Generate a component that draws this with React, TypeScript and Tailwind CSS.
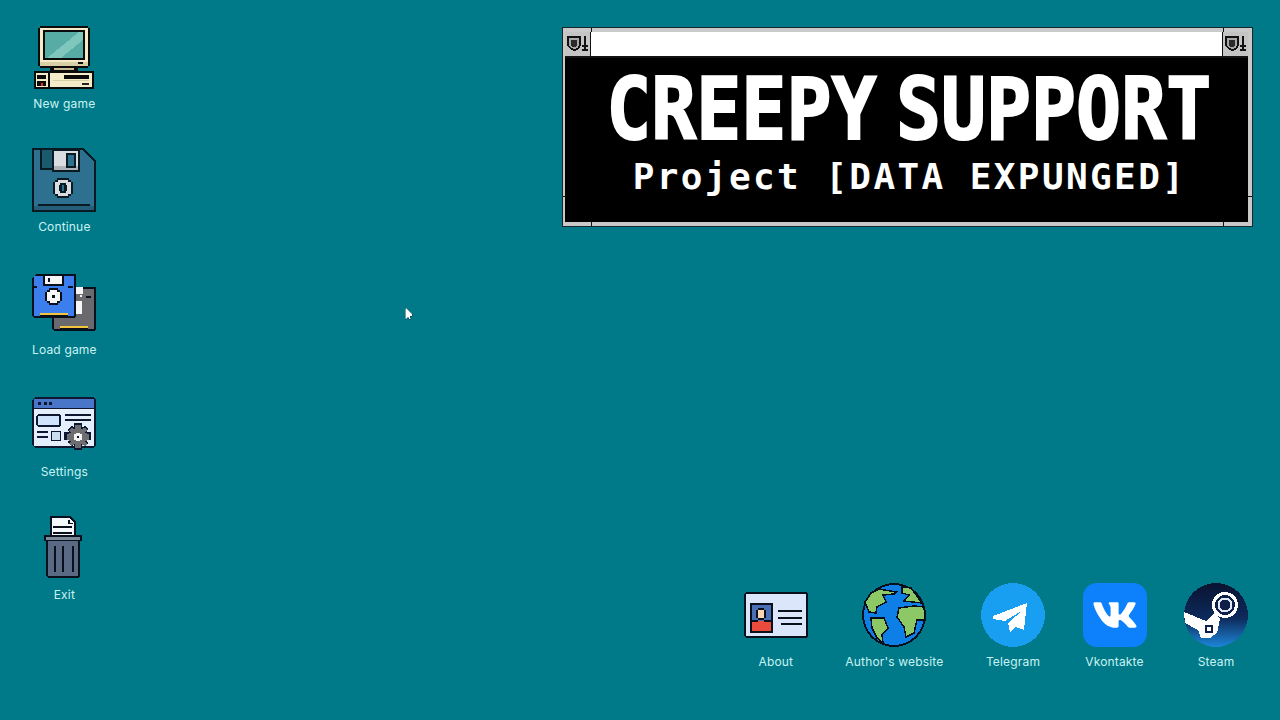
import type { ReactNode } from 'react'
import { FaVk } from 'react-icons/fa'

//-------------------------------Icons---------------------------------

const Pixel = ({ children }: { children: ReactNode }) => (
  <svg viewBox="0 0 64 64" shapeRendering="crispEdges" className="h-16 w-16">
    {children}
  </svg>
)

const ComputerIcon = () => (
  <Pixel>
    {/* monitor */}
    <path d="M8 1h48v2h2v38h-2v2H8v-2H6V3h2z" fill="#0b0b0b" />
    <rect x="8" y="3" width="48" height="38" fill="#f4ecc8" />
    <rect x="8" y="37" width="48" height="4" fill="#d9cfa4" />
    <rect x="11" y="5" width="42" height="30" fill="#0b0b0b" />
    <rect x="13" y="7" width="38" height="26" fill="#57ada5" />
    <path d="M15 33 47 7h4v8L29 33z" fill="#7fc6bc" />
    <rect x="46" y="37" width="5" height="2" fill="#0b0b0b" />
    {/* neck */}
    <rect x="18" y="43" width="28" height="3" fill="#0b0b0b" />
    <rect x="22" y="43" width="20" height="2" fill="#c9bd92" />
    {/* base */}
    <rect x="2" y="46" width="60" height="18" fill="#0b0b0b" />
    <rect x="4" y="48" width="56" height="14" fill="#f4ecc8" />
    <rect x="16" y="48" width="2" height="14" fill="#0b0b0b" />
    <rect x="5" y="50" width="9" height="4" fill="#0b0b0b" />
    <rect x="5" y="56" width="9" height="5" fill="#0b0b0b" />
    <rect x="9" y="58" width="2" height="3" fill="#d8342c" />
    <rect x="32" y="50" width="25" height="4" fill="#0b0b0b" />
    <rect x="21" y="55" width="36" height="1" fill="#d9cfa4" />
    <rect x="50" y="58" width="7" height="2" fill="#222" />
  </Pixel>
)

const FloppyIcon = () => (
  <Pixel>
    <path d="M0 0h51l13 13v51H0z" fill="#0a1a22" />
    <path d="M2 2h48l12 12v48H2z" fill="#2d7090" />
    <rect x="2" y="58" width="60" height="4" fill="#235f7b" />
    <rect x="8" y="2" width="13" height="20" fill="#1b5a6d" />
    <rect x="8" y="2" width="2" height="18" fill="#0a1a22" />
    <rect x="8" y="20" width="13" height="2" fill="#0a1a22" />
    <rect x="20" y="1" width="28" height="23" fill="#0a1a22" />
    <rect x="22" y="3" width="24" height="19" fill="#d9dde1" />
    <rect x="22" y="18" width="24" height="4" fill="#aeb4ba" />
    <rect x="34" y="5" width="10" height="15" fill="#0a1a22" />
    <rect x="36" y="7" width="6" height="11" fill="#2d7090" />
    {/* hub */}
    <path d="M25 30h12v2h2v2h2v12h-2v2h-2v2H25v-2h-2v-2h-2V34h2v-2h2z" fill="#0a1a22" />
    <path d="M26 32h10v2h3v12h-3v2H26v-2h-3V34h3z" fill="#d9dde1" />
    <path d="M28 35h6v2h1v6h-1v2h-6v-2h-1v-6h1z" fill="#0a1a22" />
    <rect x="30" y="37" width="2" height="6" fill="#2d7090" />
    <rect x="6" y="56" width="52" height="2" fill="#0a1a22" />
  </Pixel>
)

const DisksIcon = () => (
  <Pixel>
    {/* back disk */}
    <path d="M23 16h41v42l-2 2H22l-2-2V20z" fill="#0a0f1c" />
    <rect x="22" y="18" width="40" height="40" fill="#69696e" />
    <rect x="44" y="16" width="7" height="7" fill="#f6f6f6" />
    <rect x="42" y="30" width="8" height="13" fill="#f6f6f6" />
    <rect x="48" y="24" width="2" height="2" fill="#f6f6f6" />
    <rect x="54" y="25" width="5" height="2" fill="#0a0f1c" />
    <rect x="28" y="55" width="28" height="2" fill="#f2c53d" />
    <rect x="28" y="57" width="28" height="1" fill="#0a0f1c" />
    {/* front disk */}
    <path d="M4 3h40v42l-2 2H2l-2-2V7z" fill="#0a0f1c" />
    <rect x="2" y="5" width="40" height="40" fill="#3d7eef" />
    <rect x="11" y="4" width="21" height="11" fill="#0a0f1c" />
    <rect x="13" y="5" width="17" height="8" fill="#f6f6f6" />
    <rect x="16" y="7" width="2" height="4" fill="#0a0f1c" />
    <rect x="0" y="15" width="5" height="2" fill="#0a0f1c" />
    <rect x="36" y="15" width="5" height="2" fill="#0a0f1c" />
    <path d="M17 17h9v2h2v2h2v9h-2v2h-2v2h-9v-2h-2v-2h-2v-9h2v-2h2z" fill="#0a0f1c" />
    <path d="M18 19h7v2h3v9h-3v2h-7v-2h-3v-9h3z" fill="#f6f6f6" />
    <rect x="20" y="24" width="3" height="3" fill="#0a0f1c" />
    <rect x="8" y="42" width="28" height="2" fill="#f2c53d" />
    <rect x="8" y="44" width="28" height="1" fill="#0a0f1c" />
  </Pixel>
)

const SettingsIcon = () => (
  <Pixel>
    <path d="M3 4h58l3 3v45l-3 3H3l-3-3V7z" fill="#0d1830" />
    <rect x="2" y="6" width="60" height="47" fill="#e4effb" />
    <rect x="2" y="6" width="60" height="9" fill="#4a76c9" />
    <rect x="2" y="15" width="60" height="1" fill="#0d1830" />
    <rect x="6" y="9" width="3" height="3" fill="#0d1830" />
    <rect x="12" y="9" width="3" height="3" fill="#0d1830" />
    <rect x="17" y="9" width="3" height="3" fill="#0d1830" />
    <path d="M6 21h21l2 2v9l-2 2H6l-2-2v-9z" fill="#0d1830" />
    <rect x="6" y="23" width="21" height="9" fill="#cfe3fb" />
    <rect x="33" y="21" width="26" height="2" fill="#0d1830" />
    <rect x="33" y="26" width="26" height="2" fill="#0d1830" />
    <rect x="5" y="38" width="11" height="2" fill="#0d1830" />
    <rect x="5" y="43" width="11" height="2" fill="#0d1830" />
    <rect x="19" y="38" width="10" height="10" fill="#0d1830" />
    <rect x="20" y="39" width="8" height="8" fill="#c9deef" />
    {/* gear */}
    <path d="M42 30h8v4l3-1 3 3-1 3h4v8h-4l1 3-3 3-3-1v5h-8v-5l-3 1-3-3 1-3h-5v-8h5l-1-3 3-3 3 1z" fill="#0d1830" />
    <path d="M43 32h6v4l4-1 2 2-2 3 4 1v6l-4 1 2 3-2 2-4-2v4h-6v-4l-4 2-2-2 2-3-4-1v-6l4-1-2-3 2-2 4 1z" fill="#6d6d72" />
    <path d="M44 40h4v1h2v6h-2v1h-4v-1h-2v-6h2z" fill="#f4f4f4" />
    <rect x="45" y="43" width="2" height="2" fill="#0d1830" />
  </Pixel>
)

const TrashIcon = () => (
  <Pixel>
    {/* paper */}
    <path d="M18 0h20l6 6v14H18z" fill="#0a0f1c" />
    <path d="M20 2h17l5 5v13H20z" fill="#f4f7fb" />
    <rect x="36" y="4" width="2" height="4" fill="#0a0f1c" />
    <rect x="38" y="7" width="3" height="1" fill="#0a0f1c" />
    <rect x="21" y="10" width="19" height="2" fill="#0a0f1c" />
    <rect x="21" y="16" width="19" height="2" fill="#0a0f1c" />
    {/* bin */}
    <rect x="12" y="19" width="38" height="6" fill="#0a0f1c" />
    <rect x="14" y="21" width="34" height="3" fill="#7c8a9c" />
    <path d="M14 25h34v35l-2 2H16l-2-2z" fill="#0a0f1c" />
    <rect x="16" y="25" width="30" height="35" fill="#5a6a85" />
    <rect x="22" y="30" width="2" height="26" fill="#0a0f1c" />
    <rect x="30" y="30" width="2" height="26" fill="#0a0f1c" />
    <rect x="40" y="30" width="2" height="26" fill="#0a0f1c" />
  </Pixel>
)

const CardIcon = () => (
  <Pixel>
    <path d="M2 9h60l2 2v42l-2 2H2l-2-2V11z" fill="#0a0f1c" />
    <rect x="2" y="11" width="60" height="42" fill="#dbe6fb" />
    <rect x="6" y="20" width="23" height="30" fill="#0a0f1c" />
    <rect x="8" y="22" width="19" height="26" fill="#4a6fb5" />
    <path d="M14 25h6v2h2v8h-2v2h-6v-2h-2v-8h2z" fill="#0a0f1c" />
    <path d="M14 27h6v8h-6z" fill="#fcd5b5" />
    <rect x="8" y="38" width="19" height="10" fill="#ea4b3c" />
    <rect x="8" y="37" width="6" height="2" fill="#0a0f1c" />
    <rect x="20" y="37" width="7" height="2" fill="#0a0f1c" />
    <rect x="34" y="27" width="24" height="2" fill="#0a0f1c" />
    <rect x="34" y="34" width="24" height="2" fill="#0a0f1c" />
    <rect x="37" y="40" width="21" height="2" fill="#0a0f1c" />
  </Pixel>
)

const GlobeIcon = () => (
  <Pixel>
    <circle cx="32" cy="32" r="32" fill="#0a0f1c" />
    <circle cx="32" cy="32" r="30" fill="#0f7fe8" />
    <g fill="#8cc866" stroke="#0a0f1c" strokeWidth="1.5">
      <path d="M17 6 34 9 32 11 21 12 24 19 15 24 14 30 7 29 3 19 9 10z" />
      <path d="M9 35H22L26 45 20 52 21 60 15 55 10 45z" />
      <path d="M40 4 49 5 60 20 42 18 47 12 40 10z" />
      <path d="M37 25 52 23 62 24 63 37H55L52 50 44 54 42 44 35 34z" />
    </g>
  </Pixel>
)

const TelegramIcon = () => (
  <Pixel>
    <circle cx="32" cy="32" r="32" fill="#199ff2" />
    <path d="M12 33 46 20 43 47 35 44 29 49 27 40 42 27 24 38 12 36z" fill="#fff" />
  </Pixel>
)

const SteamIcon = () => (
  <Pixel>
    <defs>
      <linearGradient id="st" x1="0" y1="0" x2="0" y2="1">
        <stop offset="0" stopColor="#0a1330" />
        <stop offset="0.55" stopColor="#0d2a5c" />
        <stop offset="1" stopColor="#1e86d8" />
      </linearGradient>
    </defs>
    <circle cx="32" cy="32" r="32" fill="url(#st)" />
    <circle cx="41" cy="22" r="13" fill="#fff" />
    <circle cx="41" cy="22" r="10" fill="#0d1f4a" />
    <circle cx="41" cy="22" r="7.5" fill="#dfe6ef" />
    <circle cx="41" cy="22" r="5.5" fill="#0d1f4a" />
    <path d="M0 29 22 38 30 30 36 36 33 50 26 55H17L14 47 1 40z" fill="#fff" />
    <path d="M21 42h8v8h-8z" fill="#0d1f4a" />
    <path d="M23 44h4v4h-4z" fill="#fff" />
  </Pixel>
)

const ShieldSword = () => (
  <svg viewBox="0 0 25 25" shapeRendering="crispEdges" className="h-full w-full">
    <path d="M2 4h14v10l-1 2-2 2-2 1-2 1-2-1-2-1-2-2-1-2z" fill="#111" />
    <path d="M4 6h10v8l-1 2-2 1-2 1-2-1-2-1-1-2z" fill="#a8a8a8" />
    <path d="M6 8h6v6l-1 1-2 1-2-1-1-1z" fill="#2a2a2a" />
    <rect x="19" y="4" width="2" height="11" fill="#111" />
    <rect x="17" y="14" width="6" height="2" fill="#111" />
    <rect x="19" y="16" width="2" height="2" fill="#111" />
    <rect x="17" y="18" width="6" height="2" fill="#111" />
  </svg>
)

//-------------------------------Desktop items---------------------------------

const DesktopIcon = ({ icon, label }: { icon: ReactNode; label: string }) => (
  <div className="flex flex-col items-center">
    {icon}
    <span className="mt-[6px] whitespace-nowrap text-xs leading-[18px] tracking-[0.17px] text-[#c9f3f3]">
      {label}
    </span>
  </div>
)

const leftItems = [
  { label: 'New game', icon: <ComputerIcon /> },
  { label: 'Continue', icon: <FloppyIcon /> },
  { label: 'Load game', icon: <DisksIcon /> },
  { label: 'Settings', icon: <SettingsIcon /> },
  { label: 'Exit', icon: <TrashIcon /> },
]

const bottomItems = [
  { label: 'About', icon: <CardIcon /> },
  { label: "Author's website", icon: <GlobeIcon /> },
  { label: 'Telegram', icon: <TelegramIcon /> },
  {
    label: 'Vkontakte',
    icon: (
      <div className="flex h-16 w-16 items-center justify-center rounded-[14px] bg-[#0d80fb]">
        <FaVk className="h-[46px] w-[46px] text-white" />
      </div>
    ),
  },
  { label: 'Steam', icon: <SteamIcon /> },
]

//-------------------------------Title window---------------------------------

const TitleWindow = () => (
  <div className="relative flex h-[200px] w-[691px] flex-col border border-[#16262a] bg-[#c9c9c9] pb-1 pl-[2px] pr-1 pt-1">
    <div className="flex h-[26px] border-b-2 border-[#111] bg-white">
      <div className="h-full w-[25px] bg-[#c4c4c4]">
        <ShieldSword />
      </div>
      <div className="flex-1 border-l border-r border-[#111]" />
      <div className="h-full w-[25px] bg-[#c4c4c4]">
        <ShieldSword />
      </div>
    </div>
    <div className="flex flex-1 flex-col items-center overflow-hidden bg-black font-['DejaVu_Sans_Mono',monospace] text-white">
      <h1 className="ml-[4px] mt-[12px] scale-x-[0.88] whitespace-nowrap text-[85px] font-bold leading-[80px] [-webkit-text-stroke:2px_#fff] [word-spacing:-29px]">
        CREEPY SUPPORT
      </h1>
      <p className="ml-[6px] mt-[5px] text-[36px] font-bold leading-[44px] tracking-[2.4px]">
        Project [DATA EXPUNGED]
      </p>
    </div>
    {/* frame ticks */}
    <span className="absolute left-[28px] top-0 h-[4px] w-px bg-[#111]" />
    <span className="absolute right-[28px] top-0 h-[4px] w-px bg-[#111]" />
    <span className="absolute bottom-0 left-[28px] h-[4px] w-px bg-[#111]" />
    <span className="absolute bottom-0 right-[28px] h-[4px] w-px bg-[#111]" />
    <span className="absolute bottom-[29px] left-0 h-px w-[4px] bg-[#111]" />
    <span className="absolute bottom-[29px] right-0 h-px w-[4px] bg-[#111]" />
  </div>
)

//-------------------------------Page---------------------------------

export default function App() {
  return (
    <div className="relative flex h-[720px] w-[1280px] justify-between overflow-hidden bg-[#007a88] font-['Inter',sans-serif]">
      <div className="flex flex-col gap-[34.75px] pl-8 pt-[25px]">
        {leftItems.map((item) => (
          <DesktopIcon key={item.label} icon={item.icon} label={item.label} />
        ))}
      </div>

      <div className="flex flex-col items-end justify-between pb-[49px] pr-[27px] pt-[27px]">
        <TitleWindow />
        <div className="mr-[5px] flex gap-[37.5px]">
          {bottomItems.map((item) => (
            <DesktopIcon key={item.label} icon={item.icon} label={item.label} />
          ))}
        </div>
      </div>

      {/* mouse pointer */}
      <svg
        viewBox="0 0 8 13"
        shapeRendering="crispEdges"
        className="absolute left-[405px] top-[308px] h-[13px] w-2"
      >
        <path d="M0 0h1l1 1 1 1 1 1 1 1 1 1 1 1v2H5l1 3H4L3 9 1 11H0z" fill="#fff" stroke="#0a3340" strokeWidth="0.5" />
      </svg>
    </div>
  )
}
